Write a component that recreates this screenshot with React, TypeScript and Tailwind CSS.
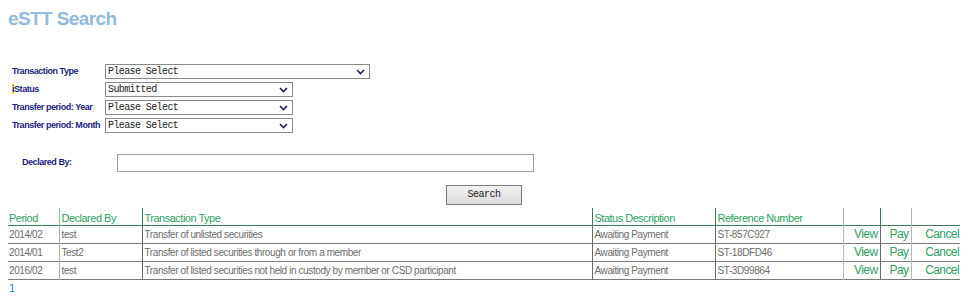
import React from "react";

type Row = {
  period: string;
  declaredBy: string;
  type: string;
  status: string;
  ref: string;
};

const rows: Row[] = [
  { period: "2014/02", declaredBy: "test", type: "Transfer of unlisted securities", status: "Awaiting Payment", ref: "ST-857C927" },
  { period: "2014/01", declaredBy: "Test2", type: "Transfer of listed securities through or from a member", status: "Awaiting Payment", ref: "ST-18DFD46" },
  { period: "2016/02", declaredBy: "test", type: "Transfer of listed securities not held in custody by member or CSD participant", status: "Awaiting Payment", ref: "ST-3D99864" },
];

function Chevron() {
  return (
    <svg width="9" height="6" viewBox="0 0 9 6" className="shrink-0">
      <path d="M1 1 L4.5 4.5 L8 1" fill="none" stroke="#1b2150" strokeWidth="1.6" />
    </svg>
  );
}

function FakeSelect({ value, width }: { value: string; width: string }) {
  return (
    <div
      className={`${width} h-[15px] border border-[#8a8a8a] bg-white flex items-center justify-between pl-[2px] pr-[4px]`}
    >
      <span className="font-['Liberation_Mono',monospace] text-[10px] tracking-[-0.6px] text-[#222] leading-none">
        {value}
      </span>
      <Chevron />
    </div>
  );
}

function FormRow({ label, children }: { label: React.ReactNode; children: React.ReactNode }) {
  return (
    <div className="flex items-center h-[15px]">
      <div className="w-[93px] text-[9px] font-bold tracking-[-0.45px] text-[#1c2380] whitespace-nowrap">
        {label}
      </div>
      {children}
    </div>
  );
}

export default function App() {
  return (
    <div className="w-[968px] h-[297px] bg-white font-['Liberation_Sans',Arial,sans-serif] overflow-hidden">
      {/* Title */}
      <h1 className="pl-[8px] pt-[8px] text-[19px] leading-[22px] font-bold tracking-[-0.6px] text-[#8fbbdf]">
        eSTT Search
      </h1>

      {/* Search form */}
      <div className="pl-[12px] mt-[34px] flex flex-col gap-[3px]">
        <FormRow label="Transaction Type">
          <FakeSelect value="Please Select" width="w-[265px]" />
        </FormRow>
        <FormRow
          label={
            <>
              <span className="bg-[#f2e600]">i</span>Status
            </>
          }
        >
          <FakeSelect value="Submitted" width="w-[188px]" />
        </FormRow>
        <FormRow label="Transfer period: Year">
          <FakeSelect value="Please Select" width="w-[188px]" />
        </FormRow>
        <FormRow label="Transfer period: Month">
          <FakeSelect value="Please Select" width="w-[188px]" />
        </FormRow>
      </div>

      <div className="flex items-center pl-[22px] mt-[21px] h-[18px]">
        <div className="w-[95px] text-[9px] font-bold tracking-[-0.45px] text-[#1c2380]">Declared By:</div>
        <div className="w-[417px] h-[18px] border border-[#a0a0a0] bg-white" />
      </div>

      <div className="pl-[446px] mt-[13px] h-[20px]">
        <button className="block w-[76px] h-[20px] leading-[18px] border border-[#7a7a7a] bg-gradient-to-b from-[#f2f2f2] to-[#dcdcdc] font-['Liberation_Mono',monospace] text-[10px] tracking-[-0.5px] text-[#222]">
          Search
        </button>
      </div>

      {/* Results */}
      <table className="ml-[8px] mt-[3px] w-[952px] table-fixed border-collapse text-[10px] leading-[13px] tracking-[-0.4px] text-[#6d6d6d]">
        <colgroup>
          <col className="w-[51px]" />
          <col className="w-[83px]" />
          <col className="w-[450px]" />
          <col className="w-[123px]" />
          <col className="w-[128px]" />
          <col className="w-[37px]" />
          <col className="w-[31px]" />
          <col className="w-[49px]" />
        </colgroup>
        <thead>
          <tr className="h-[17px] border-b border-[#3f7d5d] text-[11px] tracking-[-0.5px] text-[#2ea266]">
            <th className="p-0 text-left font-normal pl-[1px] align-bottom">Period</th>
            <th className="p-0 text-left font-normal pl-[2px] border-l border-[#8fb8a2] align-bottom">Declared By</th>
            <th className="p-0 text-left font-normal pl-[2px] border-l border-[#3f7d5d] align-bottom">Transaction Type</th>
            <th className="p-0 text-left font-normal pl-[2px] border-l border-[#3f7d5d] align-bottom">Status Description</th>
            <th className="p-0 text-left font-normal pl-[2px] border-l border-[#3f7d5d] align-bottom">Reference Number</th>
            <th className="p-0 border-l border-[#a8b8b0]" />
            <th className="p-0 border-l border-[#3f7d5d]" />
            <th className="p-0 border-l border-[#a8b8b0]" />
          </tr>
        </thead>
        <tbody>
          {rows.map((r, i) => (
            <tr key={i} className="h-[18px] border-b border-[#7a7a7a]">
              <td className="p-0 pl-[1px]">{r.period}</td>
              <td className="p-0 pl-[2px] border-l border-[#b0b0b0]">{r.declaredBy}</td>
              <td className="p-0 pl-[2px] border-l border-[#6a6a6a] whitespace-nowrap">{r.type}</td>
              <td className="p-0 pl-[2px] border-l border-[#6a6a6a]">{r.status}</td>
              <td className="p-0 pl-[2px] border-l border-[#6a6a6a]">{r.ref}</td>
              <td className="p-0 pr-[2px] text-right border-l border-[#b8b8b8] text-[12px] tracking-[-0.6px] text-[#2ea266]">View</td>
              <td className="p-0 pr-[2px] text-right border-l border-[#6a6a6a] text-[12px] tracking-[-0.6px] text-[#2ea266]">Pay</td>
              <td className="p-0 pr-[1px] text-right border-l border-[#b8b8b8] text-[12px] tracking-[-0.6px] text-[#2ea266]">Cancel</td>
            </tr>
          ))}
        </tbody>
      </table>

      <div className="pl-[9px] mt-[2px] text-[11px] leading-[13px] text-[#2386b0]">1</div>
    </div>
  );
}
